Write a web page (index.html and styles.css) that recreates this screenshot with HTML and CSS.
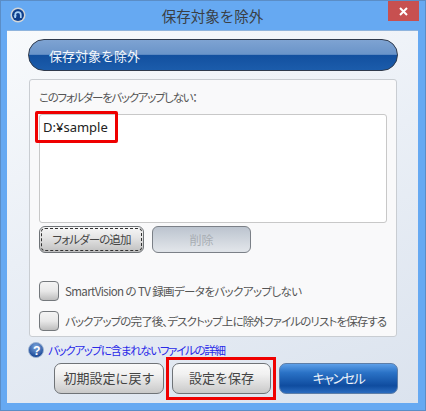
FILE: index.html
```html
<!DOCTYPE html>
<html lang="ja">
<head>
    <meta charset="UTF-8">
    <title>保存対象を除外</title>
    <link rel="stylesheet" href="styles.css">
</head>
<body>

<div class="window">
    <div class="titlebar">
        <svg class="app-icon" width="16" height="16" viewBox="0 0 16 16">
            <circle cx="8" cy="8" r="7.5" fill="#d3d5d6"/>
            <circle cx="8" cy="8" r="6" fill="#0f3f8c"/>
            <path d="M5.200 11V8a2.800 2.800 0 0 1 5.600 0v3" fill="none" stroke="#a9d2f7" stroke-width="1.700"/>
            <path d="M3.400 8.400h3.600l-1.800 2.400z" fill="#a9d2f7"/>
        </svg>
        <div class="title">保存対象を除外</div>
        <div class="close">
            <svg width="9" height="9" viewBox="0 0 9 9">
                <path d="M1 1l7 7M8 1l-7 7" stroke="#fff" stroke-width="2"/>
            </svg>
        </div>
    </div>

    <div class="client">
        <div class="pill">保存対象を除外</div>

        <div class="panel">
            <div class="panel-label">このフォルダーをバックアップしない：</div>
            <div class="listbox">D:¥sample</div>
            <div class="list-buttons">
                <div class="btn btn-add">フォルダーの追加</div>
                <div class="btn btn-delete">削除</div>
            </div>
            <div class="checks">
                <div class="check-row"><span class="checkbox"></span><span class="check-first">SmartVision の TV 録画データをバックアップしない</span></div>
                <div class="check-row"><span class="checkbox"></span><span class="check-second">バックアップの完了後、デスクトップ上に除外ファイルのリストを保存する</span></div>
            </div>
        </div>

        <div class="help">
            <svg width="16" height="16" viewBox="0 0 17 17">
                <defs>
                    <radialGradient id="helpGlow" cx="50%" cy="30%" r="70%">
                        <stop offset="0" stop-color="#7fa9e0"/>
                        <stop offset="1" stop-color="#123f8f"/>
                    </radialGradient>
                </defs>
                <circle cx="8.5" cy="8.500" r="8" fill="url(#helpGlow)" stroke="#9fb4d2"/>
                <text x="8.5" y="13.500" text-anchor="middle" class="help-mark">?</text>
            </svg>
            <span>バックアップに含まれないファイルの詳細</span>
        </div>

        <div class="footer">
            <div class="btn btn-reset">初期設定に戻す</div>
            <div class="btn btn-save">設定を保存</div>
            <div class="btn btn-cancel">キャンセル</div>
        </div>
    </div>

    <!-- 赤枠 -->
    <div class="mark mark-folder"></div>
    <div class="mark mark-save"></div>
</div>

</body>
</html>
```

FILE: styles.css
```css
html, body {
    margin: 0;
    padding: 0;
    font-family: "Noto Sans CJK JP", "Noto Sans", sans-serif;
    font-feature-settings: "palt";
    color: #444;
}

.window {
    position: relative;
    width: 426px;
    height: 411px;
    box-sizing: border-box;
    padding: 0 7px 7px 6px;
    background: #66a9f2;
    border: 1px solid #5b8dc6;
    display: flex;
    flex-direction: column;
}

.titlebar {
    height: 29px;
    flex: none;
    position: relative;
}
.app-icon {
    position: absolute;
    left: 3px;
    top: 6px;
}
.title {
    text-align: center;
    font-size: 14.5px;
    font-feature-settings: normal;
    line-height: 30px;
    color: #3a3f45;
}
.close {
    position: absolute;
    right: -1px;
    top: 0;
    width: 31px;
    height: 20px;
    background: #c75050;
    display: flex;
    align-items: center;
    justify-content: center;
}

.client {
    flex: 1;
    box-sizing: border-box;
    padding: 8px 20px 8px 21px;
    background: linear-gradient(160deg, #f8fafc 0%, #eaeff6 45%, #dbe3ee 100%);
    border-top: 1px solid #8fb4dd;
    display: flex;
    flex-direction: column;
}

.pill {
    height: 32px;
    box-sizing: border-box;
    border: 1px solid #2f3a4c;
    border-radius: 16px;
    padding-left: 20px;
    font-size: 13px;
    font-feature-settings: normal;
    line-height: 31px;
    color: #f2f6fb;
    background: linear-gradient(#7ea3d2 0%, #6a94c9 48%, #13509f 50%, #1b5cab 100%);
}

.panel {
    margin: 8px 1px 0 1px;
    height: 258px;
    box-sizing: border-box;
    border: 1px solid #c9cdd2;
    border-radius: 3px;
    background: #f9f9fa;
    padding: 0 9px;
}
.panel-label {
    font-size: 11.5px;
    letter-spacing: -1.3px;
    line-height: 16px;
    margin-top: 9px;
    color: #555;
}
.listbox {
    margin-top: 9px;
    height: 109px;
    box-sizing: border-box;
    background: #fff;
    border: 1px solid #c8c8c8;
    border-radius: 3px;
    padding: 2px 3px;
    font-family: "Noto Sans", sans-serif;
    font-size: 13px;
    line-height: 20px;
    color: #222;
}

.list-buttons {
    display: flex;
    gap: 8px;
    margin-top: 3px;
}
.btn {
    box-sizing: border-box;
    border: 1px solid #6f7377;
    border-radius: 6px;
    text-align: center;
    font-size: 12px;
    background: linear-gradient(#fafafa, #f1f1f1 35%, #c9c9c9);
    color: #444;
}
.btn-add {
    width: 105px;
    height: 27px;
    line-height: 25px;
    font-size: 11.5px;
    letter-spacing: -0.9px;
    background: linear-gradient(#f6f6f6, #e6e6e6 40%, #bfbfbf);
    outline: 1px dashed #333;
    outline-offset: -3px;
}
.btn-delete {
    width: 99px;
    height: 27px;
    line-height: 25px;
    border-color: #7b8087;
    background: linear-gradient(#bcc4cf, #dfe3e8 90%);
    color: #a8adb3;
}

.checks {
    margin-top: 28px;
}
.check-row {
    display: flex;
    align-items: center;
    height: 20px;
    margin-bottom: 10px;
    font-size: 11.5px;
    color: #555;
    white-space: nowrap;
}
.check-first { letter-spacing: -0.6px; }
.check-second { letter-spacing: -0.88px; }
.checkbox {
    flex: none;
    width: 20px;
    height: 20px;
    box-sizing: border-box;
    border: 1px solid #74787c;
    border-radius: 4px;
    margin-right: 6px;
    background: linear-gradient(#f4f4f4, #e8e8e8 50%, #bdbdbd);
}

.help {
    margin-top: 4px;
    height: 18px;
    display: flex;
    align-items: center;
    gap: 4px;
    font-size: 11.5px;
    letter-spacing: -1.3px;
    color: #2a2ae8;
    white-space: nowrap;
}
.help-mark {
    font-family: "Liberation Sans", sans-serif;
    font-size: 13px;
    font-weight: bold;
    fill: #fff;
}

.footer {
    display: flex;
    margin-top: 4px;
    margin-left: 26px;
    gap: 8px;
}
.footer .btn {
    height: 31px;
    line-height: 28px;
    font-size: 13px;
    font-feature-settings: normal;
    border-radius: 7px;
}
.btn-reset { width: 110px; }
.btn-save { width: 99px; }
.footer .btn-cancel {
    width: 119px;
    font-feature-settings: "palt";
    letter-spacing: -1.5px;
    color: #eef4fb;
    border-color: #5d7ea8;
    background: linear-gradient(#5d9fe8, #2a72c6 30%, #0f4c9f 75%, #2a6cc0);
}

.mark {
    position: absolute;
    box-sizing: border-box;
    border: 3px solid #ef0000;
    border-radius: 2px;
}
.mark-folder {
    left: 34px;
    top: 110px;
    width: 83px;
    height: 32px;
}
.mark-save {
    left: 165px;
    top: 356px;
    width: 110px;
    height: 43px;
    border-radius: 0;
}
```
